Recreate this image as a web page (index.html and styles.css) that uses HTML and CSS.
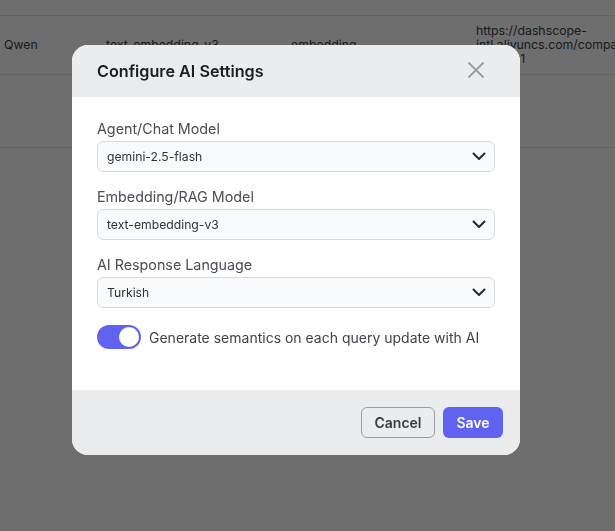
FILE: index.html
```html
<!DOCTYPE html>
<html>
<head>
<meta charset="utf-8">
<link rel="stylesheet" href="styles.css">
</head>
<body>
<div class="table">
  <div class="row head"></div>
  <div class="row r1">
    <div class="c c1">Qwen</div>
    <div class="c c2">text-embedding-v3</div>
    <div class="c c3">embedding</div>
    <div class="c c4">https://dashscope-<br>intl.aliyuncs.com/compat<br>mode/v1</div>
  </div>
  <div class="row r2"></div>
</div>

<div class="overlay">
  <div class="modal">
    <div class="modal-head">
      <h2 class="title">Configure AI Settings</h2>
      <svg class="close" width="18" height="18" viewBox="0 0 18 18"><path d="M2 2 L16 16 M16 2 L2 16" stroke="#9a9ca1" stroke-width="1.8" fill="none" stroke-linecap="round"/></svg>
    </div>
    <div class="modal-body">
      <div class="field">
        <div class="label">Agent/Chat Model</div>
        <div class="select"><span>gemini-2.5-flash</span><svg class="chev" width="14" height="9" viewBox="0 0 14 9"><path d="M1.5 1.5 L7 7 L12.5 1.5" stroke="#1f2937" stroke-width="2" fill="none" stroke-linecap="round" stroke-linejoin="round"/></svg></div>
      </div>
      <div class="field">
        <div class="label">Embedding/RAG Model</div>
        <div class="select"><span>text-embedding-v3</span><svg class="chev" width="14" height="9" viewBox="0 0 14 9"><path d="M1.5 1.5 L7 7 L12.5 1.5" stroke="#1f2937" stroke-width="2" fill="none" stroke-linecap="round" stroke-linejoin="round"/></svg></div>
      </div>
      <div class="field">
        <div class="label">AI Response Language</div>
        <div class="select"><span>Turkish</span><svg class="chev" width="14" height="9" viewBox="0 0 14 9"><path d="M1.5 1.5 L7 7 L12.5 1.5" stroke="#1f2937" stroke-width="2" fill="none" stroke-linecap="round" stroke-linejoin="round"/></svg></div>
      </div>
      <div class="toggle-row">
        <div class="toggle"><div class="knob"></div></div>
        <span class="toggle-text">Generate semantics on each query update with AI</span>
      </div>
    </div>
    <div class="modal-foot">
      <button class="btn cancel">Cancel</button>
      <button class="btn save">Save</button>
    </div>
  </div>
</div>
</body>
</html>
```
FILE: styles.css
```css
* { box-sizing: border-box; }
html, body { margin: 0; padding: 0; }
body {
  width: 615px;
  height: 531px;
  overflow: hidden;
  background: #ffffff;
  font-family: Inter, "Noto Sans", sans-serif;
  position: relative;
}
.table { width: 615px; }
.row {
  display: flex;
  border-bottom: 1px solid #e2e4e8;
}
.row.head { height: 16px; }
.row.r1 { height: 59px; align-items: center; }
.row.r2 { height: 73px; }
.c {
  font-size: 12.3px;
  color: #3b3d42;
  line-height: 14px;
  white-space: nowrap;
}
.c1 { width: 106px; padding-left: 4px; }
.c2 { width: 185px; }
.c3 { width: 185px; }
.c4 { width: 139px; overflow: hidden; }

.overlay {
  position: fixed;
  inset: 0;
  background: rgba(0, 0, 0, 0.57);
  padding: 45px 0 0 72px;
}
.modal {
  width: 448px;
  border-radius: 16px;
  overflow: hidden;
  background: #ffffff;
}
.modal-head {
  height: 52px;
  background: #ebecee;
  display: flex;
  align-items: center;
  justify-content: space-between;
  padding: 0 35px 0 25px;
}
.title {
  margin: 0;
  font-size: 16.2px;
  font-weight: 600;
  color: #1c1d21;
}
.close { display: block; margin-top: -2px; }
.modal-body {
  padding: 22px 25px 41px 25px;
  display: flex;
  flex-direction: column;
  gap: 15px;
}
.field { display: flex; flex-direction: column; gap: 2px; }
.label {
  font-size: 14.3px;
  line-height: 20px;
  color: #4b4d54;
}
.select {
  height: 31px;
  border: 1px solid #d8dade;
  border-radius: 6px;
  background: #f9fafb;
  display: flex;
  align-items: center;
  justify-content: space-between;
  padding: 0 8px 0 9px;
  font-size: 12.2px;
  color: #303238;
}
.chev { display: block; }
.toggle-row {
  display: flex;
  align-items: center;
  gap: 8px;
  margin-top: 2px;
}
.toggle {
  width: 44px;
  height: 24px;
  border-radius: 12px;
  background: #5f63f0;
  display: flex;
  justify-content: flex-end;
  align-items: center;
  padding: 2px;
  flex-shrink: 0;
}
.knob {
  width: 20px;
  height: 20px;
  border-radius: 50%;
  background: #ffffff;
}
.toggle-text {
  font-size: 14px;
  color: #404248;
  white-space: nowrap;
}
.modal-foot {
  height: 65px;
  background: #ebecee;
  display: flex;
  align-items: center;
  justify-content: flex-end;
  gap: 8px;
  padding: 0 17px 0 0;
}
.btn {
  height: 31px;
  border-radius: 6px;
  font-family: Inter, "Noto Sans", sans-serif;
  font-size: 14px;
  font-weight: 600;
  padding: 0;
  cursor: pointer;
}
.cancel {
  background: transparent;
  border: 1px solid #9a9ca1;
  color: #3a3c42;
  width: 74px;
}
.save {
  background: #5f63f0;
  border: none;
  color: #ffffff;
  width: 60px;
}
```
